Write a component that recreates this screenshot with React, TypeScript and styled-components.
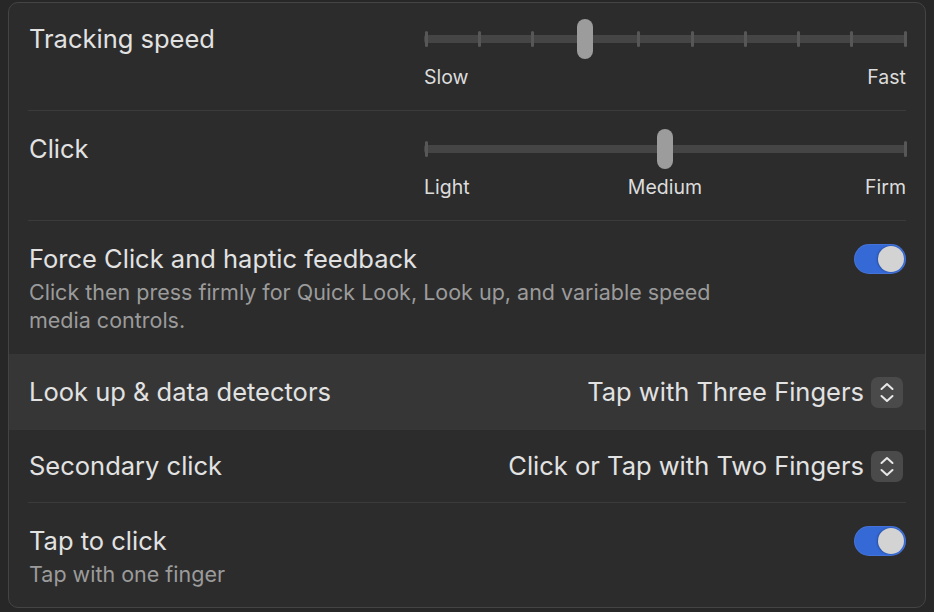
import React from "react";
import styled, { createGlobalStyle } from "styled-components";

const Global = createGlobalStyle`
  html, body { margin: 0; padding: 0; background: #272727; }
  body { font-family: Inter, "Noto Sans", "Liberation Sans", sans-serif; -webkit-font-smoothing: antialiased; }
  * { box-sizing: border-box; }
`;

const Page = styled.div`
  width: 934px;
  height: 612px;
  padding: 2px 8px 0 8px;
  background: #272727;
`;

const Panel = styled.div`
  width: 918px;
  height: 606px;
  border: 1px solid #444444;
  border-radius: 10px;
  background: #2c2c2c;
  display: flex;
  flex-direction: column;
  overflow: hidden;
`;

const Row = styled.div<{ $highlight?: boolean }>`
  padding: 0 19px 0 19px;
  background: ${(p) => (p.$highlight ? "#363636" : "transparent")};
`;

const RowInner = styled.div<{ $divider?: boolean; $pt: number; $pb: number; $center?: boolean }>`
  display: flex;
  justify-content: space-between;
  align-items: ${(p) => (p.$center ? "center" : "flex-start")};
  padding: ${(p) => p.$pt}px 0 ${(p) => p.$pb}px 1px;
  border-bottom: ${(p) => (p.$divider ? "1px solid #3b3b3b" : "none")};
`;

const TextCol = styled.div`
  display: flex;
  flex-direction: column;
`;

const Title = styled.div<{ $lh?: number }>`
  font-size: 25.5px;
  line-height: ${(p) => p.$lh ?? 32}px;
  color: #e2e2e2;
`;

const Desc = styled.div`
  margin-top: 3px;
  font-size: 21.5px;
  line-height: 28px;
  color: #9b9b9b;
  max-width: 712px;
`;

const SliderWrap = styled.div`
  width: 482px;
  display: flex;
  flex-direction: column;
`;

const Track = styled.div`
  position: relative;
  height: 40px;
  display: flex;
  align-items: center;
`;

const TrackBar = styled.div`
  width: 100%;
  height: 8px;
  border-radius: 2px;
  background: #454545;
`;

const Tick = styled.div`
  position: absolute;
  top: 12px;
  width: 3px;
  height: 16px;
  margin-left: -1px;
  border-radius: 2px;
  background: #575757;
`;

const Knob = styled.div`
  position: absolute;
  top: 0;
  width: 16px;
  height: 40px;
  margin-left: -8px;
  border-radius: 8px;
  background: #9c9c9c;
`;

const Labels = styled.div`
  position: relative;
  height: 22px;
  margin-top: 7px;
  display: flex;
  justify-content: space-between;
  font-size: 19.5px;
  line-height: 22px;
  color: #dcdcdc;
`;

const MidLabel = styled.span`
  position: absolute;
  left: 50%;
  transform: translateX(-50%);
  top: 0;
`;

const Toggle = styled.div`
  width: 52px;
  height: 30px;
  margin-top: 1px;
  border-radius: 15px;
  background: #3569d6;
  padding: 2px;
  display: flex;
  justify-content: flex-end;
  box-shadow: inset 0 0 0 1px rgba(255, 255, 255, 0.08);
  flex-shrink: 0;
`;

const ToggleKnob = styled.div`
  width: 26px;
  height: 26px;
  border-radius: 50%;
  background: #d3d3d3;
  box-shadow: -1px 0 2px rgba(0, 0, 0, 0.25);
`;

const Select = styled.div`
  height: 32px;
  display: flex;
  align-items: center;
  gap: 7px;
  margin-right: 3px;
  font-size: 25.5px;
  line-height: 32px;
  color: #e2e2e2;
`;

const Stepper = styled.div`
  width: 32px;
  height: 31px;
  margin-top: 1px;
  border-radius: 7px;
  background: #4a4a4a;
`;

function Chevrons() {
  return (
    <svg width="32" height="31" viewBox="0 0 32 31" fill="none" style={{ display: "block" }}>
      <path d="M10.5 12 L16 7 L21.5 12" stroke="#e8e8e8" strokeWidth="2" strokeLinecap="round" strokeLinejoin="round" />
      <path d="M10.5 19 L16 24 L21.5 19" stroke="#e8e8e8" strokeWidth="2" strokeLinecap="round" strokeLinejoin="round" />
    </svg>
  );
}

function Slider({ ticks, value, labels }: { ticks: number; value: number; labels: string[] }) {
  const inset = 1.5;
  const tickArr = Array.from({ length: ticks }, (_, i) => i / (ticks - 1));
  return (
    <SliderWrap>
      <Track>
        <TrackBar />
        {tickArr.map((t, i) => (
          <Tick key={i} style={{ left: `calc(${inset}px + (100% - ${inset * 2}px) * ${t})` }} />
        ))}
        <Knob style={{ left: `calc(${inset}px + (100% - ${inset * 2}px) * ${value})` }} />
      </Track>
      <Labels>
        <span>{labels[0]}</span>
        {labels.length === 3 && <MidLabel>{labels[1]}</MidLabel>}
        <span>{labels[labels.length - 1]}</span>
      </Labels>
    </SliderWrap>
  );
}

export default function App() {
  return (
    <>
      <Global />
      <Page>
        <Panel>
          <Row>
            <RowInner $divider $pt={16} $pb={22}>
              <Title $lh={40}>Tracking speed</Title>
              <Slider ticks={10} value={3 / 9} labels={["Slow", "Fast"]} />
            </RowInner>
          </Row>
          <Row>
            <RowInner $divider $pt={18} $pb={22}>
              <Title $lh={40}>Click</Title>
              <Slider ticks={2} value={0.5} labels={["Light", "Medium", "Firm"]} />
            </RowInner>
          </Row>
          <Row>
            <RowInner $pt={22} $pb={20}>
              <TextCol>
                <Title>Force Click and haptic feedback</Title>
                <Desc>Click then press firmly for Quick Look, Look up, and variable speed media controls.</Desc>
              </TextCol>
              <Toggle>
                <ToggleKnob />
              </Toggle>
            </RowInner>
          </Row>
          <Row $highlight>
            <RowInner $center $pt={22} $pb={22}>
              <Title>Look up &amp; data detectors</Title>
              <Select>
                Tap with Three Fingers
                <Stepper>
                  <Chevrons />
                </Stepper>
              </Select>
            </RowInner>
          </Row>
          <Row>
            <RowInner $divider $center $pt={20} $pb={20}>
              <Title>Secondary click</Title>
              <Select>
                Click or Tap with Two Fingers
                <Stepper>
                  <Chevrons />
                </Stepper>
              </Select>
            </RowInner>
          </Row>
          <Row>
            <RowInner $pt={22} $pb={19}>
              <TextCol>
                <Title>Tap to click</Title>
                <Desc>Tap with one finger</Desc>
              </TextCol>
              <Toggle>
                <ToggleKnob />
              </Toggle>
            </RowInner>
          </Row>
        </Panel>
      </Page>
    </>
  );
}
